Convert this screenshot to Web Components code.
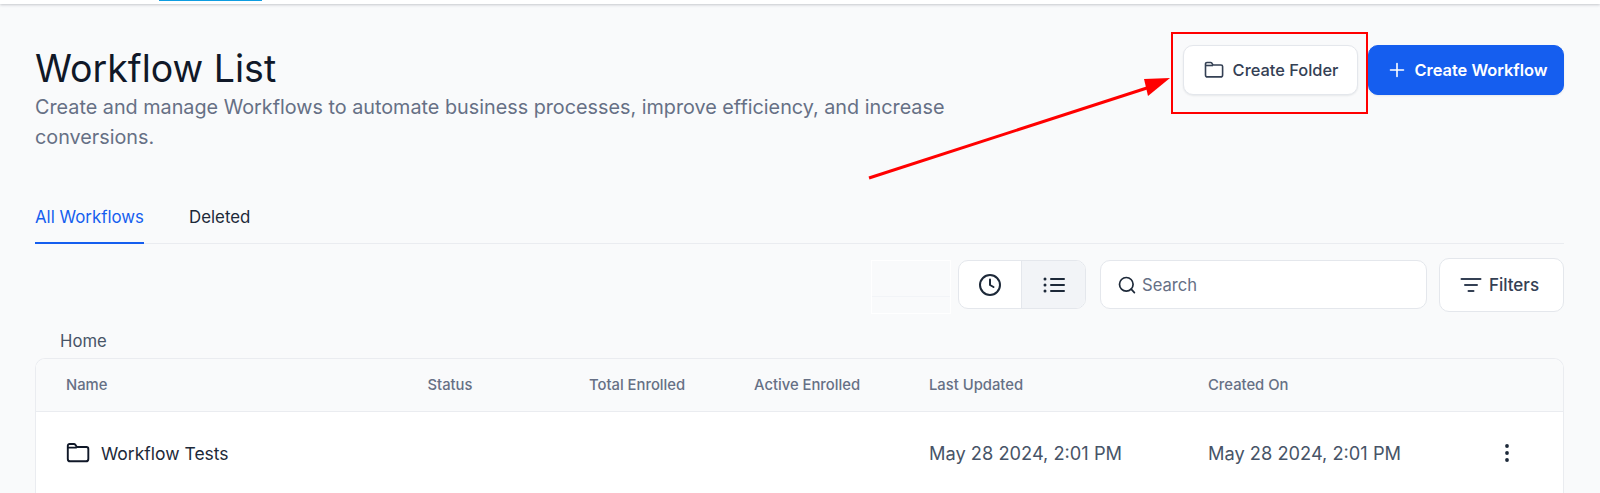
<!DOCTYPE html>
<html lang="en"><head><meta charset="utf-8"><title>Workflow List</title>
<style>
html,body{margin:0;height:493px;overflow:hidden;background:#f9fafb;font-family:Inter,"Liberation Sans",sans-serif}
</style></head><body>
<wf-page>
  <wf-topbar></wf-topbar>
  <wf-header title="Workflow List">
    Create and manage Workflows to automate business processes, improve efficiency, and increase conversions.
    <wf-button slot="actions" icon="folder" style="width:175px;gap:9px;padding-left:1px">Create Folder</wf-button>
    <wf-button slot="actions" icon="plus" variant="primary" style="width:196px;gap:9px;padding-left:5px">Create Workflow</wf-button>
  </wf-header>
  <wf-tabs></wf-tabs>
  <wf-toolbar></wf-toolbar>
  <wf-crumb>Home</wf-crumb>
  <wf-table></wf-table>
  <wf-annotation></wf-annotation>
</wf-page>
<script>
const ICONS={
 folder:'<svg width="20" height="20" viewBox="0 0 20 20" fill="none" stroke="currentColor" stroke-width="1.6" stroke-linejoin="round"><path d="M1.5 5.5V4a1.5 1.5 0 0 1 1.5-1.5h3.6c.5 0 .9.2 1.2.6L9 5h8a1.6 1.6 0 0 1 1.6 1.6v8.3a2 2 0 0 1-2 2H3.5a2 2 0 0 1-2-2z"/><path d="M1.5 5.5H9"/></svg>',
 plus:'<svg width="16" height="16" viewBox="0 0 16 16" fill="none" stroke="currentColor" stroke-width="1.6" stroke-linecap="round"><path d="M8 1.5v13M1.5 8h13"/></svg>',
 clock:'<svg width="24" height="24" viewBox="0 0 24 24" fill="none" stroke="currentColor" stroke-width="2" stroke-linecap="round" stroke-linejoin="round"><circle cx="12" cy="12" r="10"/><path d="M12 6.5V12l3.5 2"/></svg>',
 list:'<svg width="22" height="18" viewBox="0 0 22 18" fill="none" stroke="currentColor" stroke-width="2" stroke-linecap="round"><path d="M8 3h13M8 9h13M8 15h13"/><path d="M2 3h.01M2 9h.01M2 15h.01" stroke-width="3"/></svg>',
 search:'<svg width="18" height="18" viewBox="0 0 18 18" fill="none" stroke="currentColor" stroke-width="1.7" stroke-linecap="round"><circle cx="8.3" cy="8.3" r="6.8"/><path d="M13.2 13.2l3.2 3.4"/></svg>',
 filter:'<svg width="22" height="18" viewBox="0 0 22 18" fill="none" stroke="currentColor" stroke-width="2" stroke-linecap="round"><path d="M1.5 3h19M5 9h12M8.5 15h5"/></svg>',
 kebab:'<svg width="6" height="20" viewBox="0 0 6 20" fill="currentColor"><circle cx="3" cy="3" r="1.9"/><circle cx="3" cy="10" r="1.9"/><circle cx="3" cy="17" r="1.9"/></svg>'
};
function def(name,css,html){
  customElements.define(name,class extends HTMLElement{
    constructor(){super();this.attachShadow({mode:'open'});}
    connectedCallback(){
      const h=typeof html==='function'?html(this):html;
      this.shadowRoot.innerHTML='<style>'+css+'</style>'+h;
    }
  });
}
def('wf-page',':host{display:block;position:relative;width:1600px;height:493px;overflow:hidden}','<slot></slot>');
def('wf-topbar',`:host{display:block;height:4px;background:#fff;box-shadow:0 1px 3px rgba(16,24,40,.22)}
 i{display:block;width:103px;height:1px;margin-left:159px;background:#0e9ce0}`,'<i></i>');
def('wf-header',`:host{display:flex;justify-content:space-between;align-items:flex-start;padding:41px 36px 0 35px;height:144px;box-sizing:content-box}
 h1{margin:0;font:400 37.5px/44px Inter,sans-serif;color:#101828;letter-spacing:0}
 p{margin:1px 0 0;width:930px;font:400 19.8px/30px Inter,sans-serif;color:#667085}
 .t{padding-top:2px}
 .a{display:flex;gap:10px}`,
 e=>`<div class="t"><h1>${e.getAttribute('title')}</h1><p><slot></slot></p></div><div class="a"><slot name="actions"></slot></div>`);
def('wf-button',`:host{display:flex;box-sizing:border-box;height:50px;align-items:center;justify-content:center;gap:8px;border-radius:10px;background:#fff;border:1.5px solid #e4e7ec;box-shadow:0 1px 2px rgba(16,24,40,.08);color:#344054;font:500 16.4px Inter,sans-serif;white-space:nowrap}
 :host([variant=primary]){background:#155eef;border-color:#155eef;color:#fff;font-weight:600;font-size:16.4px}
 svg{display:block}`,
 e=>ICONS[e.getAttribute('icon')]+'<span><slot></slot></span>');
def('wf-tabs',`:host{display:flex;gap:45px;margin:0 36px 0 35px;height:55px;box-sizing:border-box;border-bottom:1px solid #eaecf0;font:400 16.85px/56px Inter,sans-serif;color:#1d2939}
 .on{color:#155eef;height:55px;box-sizing:border-box;border-bottom:2px solid #155eef}`,
 '<span class="on">All Workflows</span><span>Deleted</span>');
def('wf-toolbar',`:host{display:flex;align-items:flex-start;justify-content:flex-end;margin:14px 36px 0 35px;height:54px;font-family:Inter,sans-serif}
 .ghost{width:80px;height:54px;margin-top:2px;box-sizing:border-box;border:1px solid #fff;margin-right:7px;display:flex;flex-direction:column;justify-content:flex-end}
 .ghost i{display:block;height:16px;border-top:1px solid #f2f4f7}
 .seg{display:flex;margin-top:2px;width:128px;height:49px;box-sizing:border-box;border:1.5px solid #e4e7ec;border-radius:10px;overflow:hidden;background:#fff;color:#1d2939}
 .seg div{display:flex;align-items:center;justify-content:center;width:62px}
 .seg div+div{flex:1;background:#f2f4f7;border-left:1.5px solid #e4e7ec}
 .search{margin:2px 0 0 14px;width:327px;height:49px;box-sizing:border-box;border:1.5px solid #e4e7ec;border-radius:10px;background:#fff;display:flex;align-items:center;gap:5px;padding-left:17px;color:#1d2939}
 .search span{font:400 16.6px/20px Inter,sans-serif;color:#667085;margin-top:1px;padding-left:1px}
 .f{margin-left:12px;width:125px;height:54px;box-sizing:border-box;border:1.5px solid #e4e7ec;border-radius:10px;background:#fff;display:flex;align-items:center;justify-content:center;gap:7px;padding-right:4px;font:500 17px Inter,sans-serif;color:#344054}
 svg{display:block}`,
 `<div class="ghost"><i></i></div><div class="seg"><div>${ICONS.clock}</div><div>${ICONS.list}</div></div><div class="search">${ICONS.search}<span>Search</span></div><div class="f">${ICONS.filter}<span>Filters</span></div>`);
def('wf-crumb',`:host{display:block;margin:13px 0 0 60px;height:33px;font:400 16.7px/32px Inter,sans-serif;color:#475467}`,'<slot></slot>');
def('wf-table',`:host{display:block;margin:0 36px 0 35px;height:200px;box-sizing:border-box;border:1.5px solid #eaecf0;border-bottom:0;border-radius:10px 10px 0 0;overflow:hidden;background:#fff;font-family:Inter,sans-serif}
 .r{display:grid;grid-template-columns:361.5px 161.5px 165px 175px 279px 1fr 59px;padding-left:30px;align-items:center}
 .h{height:53px;background:#f9fafb;border-bottom:1.5px solid #eaecf0;font:500 14.8px Inter,sans-serif;color:#667085;box-sizing:border-box}
 .b{height:82px;font:400 18.25px Inter,sans-serif;color:#475467}
 .n{display:flex;align-items:center;gap:11px;font:400 17.5px Inter,sans-serif;color:#1d2939}
 .n svg{color:#101828}
 .k{color:#1d2939;display:flex}`,
 `<div class="r h"><span>Name</span><span>Status</span><span>Total Enrolled</span><span>Active Enrolled</span><span>Last Updated</span><span>Created On</span><span></span></div>
  <div class="r b"><span class="n">${ICONS.folder.replace('width="20" height="20"','width="24" height="24"')}Workflow Tests</span><span></span><span></span><span></span><span>May 28 2024, 2:01 PM</span><span>May 28 2024, 2:01 PM</span><span class="k">${ICONS.kebab}</span></div>`);
def('wf-annotation',`:host{position:absolute;inset:0;pointer-events:none}
 svg{position:absolute;left:0;top:0}`,
 `<svg width="1600" height="493" fill="none"><rect x="1172" y="33" width="195" height="80" stroke="#f00" stroke-width="2"/><path d="M869 178L1150 87" stroke="#f00" stroke-width="3"/><path d="M1170 78L1148 96L1144 79Z" fill="#f00"/></svg>`);
</script>
</body></html>
